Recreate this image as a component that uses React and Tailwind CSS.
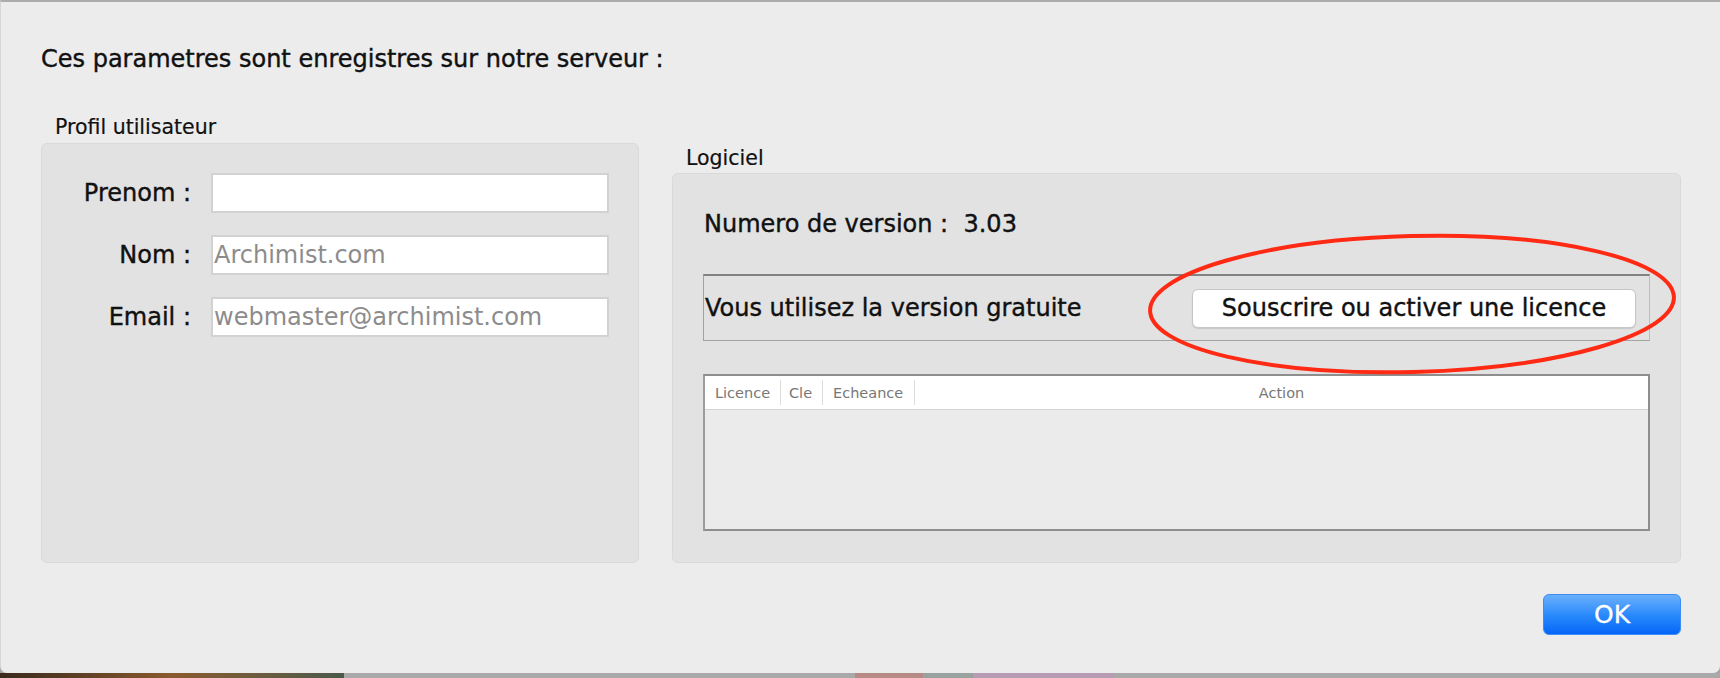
import React from "react";

const font = { fontFamily: '"DejaVu Sans", "Liberation Sans", sans-serif' };

function Field({ label, value }) {
  return (
    <div className="flex items-center">
      <div className="w-[149px] text-right text-[24px] leading-[28px] text-[#111] [-webkit-text-stroke:0.4px_#111]">{label}</div>
      <div className="ml-[20px] flex h-[40px] w-[398px] items-center border-2 border-[#d2d2d2] bg-white pl-[1px] text-[24px] leading-[28px] text-[#8c8c8c]">
        {value}
      </div>
    </div>
  );
}

export default function App() {
  return (
    <div className="flex h-[678px] w-[1720px] flex-col overflow-hidden bg-[#a6a6a6]" style={font}>
      {/* Dialog window */}
      <div className="flex h-[673px] flex-col rounded-b-[7px] border-t-2 border-l border-[#acacac] border-l-[#d6d6d6] bg-[#ececec] pt-[43px] pl-[40px] pr-[39px]">
        <h1 className="text-[24px] font-normal leading-[28px] text-[#111] [-webkit-text-stroke:0.4px_#111]">
          Ces parametres sont enregistres sur notre serveur :
        </h1>

        <div className="mt-[42px] flex items-end gap-[33px]">
          {/* Profil utilisateur */}
          <div className="flex w-[598px] flex-col">
            <div className="pl-[14px] text-[20.5px] leading-[24px] text-[#111] [-webkit-text-stroke:0.2px_#111]">Profil utilisateur</div>
            <div className="mt-[4px] flex h-[420px] flex-col gap-[22px] rounded-[6px] border border-[#d9d9d9] bg-[#e2e2e2] pt-[29px]">
              <Field label="Prenom :" value="" />
              <Field label="Nom :" value="Archimist.com" />
              <Field label="Email :" value="webmaster@archimist.com" />
            </div>
          </div>

          {/* Logiciel */}
          <div className="flex w-[1009px] flex-col">
            <div className="pl-[14px] text-[20.5px] leading-[24px] text-[#111] [-webkit-text-stroke:0.2px_#111]">Logiciel</div>
            <div className="relative mt-[3px] flex h-[390px] flex-col rounded-[6px] border border-[#d9d9d9] bg-[#e2e2e2] px-[30px] pt-[36px]">
              <div className="pl-[1px] text-[24px] leading-[28px] text-[#111] [-webkit-text-stroke:0.4px_#111]">
                Numero de version :&nbsp; 3.03
              </div>

              <div className="mt-[36px] flex h-[67px] items-center justify-between border border-[#a3a3a3] border-t-2 border-t-[#828282] border-r-[#bcbcbc] pl-[1px] pr-[13px]">
                <span className="text-[24px] leading-[28px] text-[#111] [-webkit-text-stroke:0.4px_#111]">Vous utilisez la version gratuite</span>
                <button className="flex h-[39px] w-[444px] items-center justify-center rounded-[6px] border border-[#c6c6c6] bg-white text-[24px] leading-[28px] text-[#111] shadow-[0_1px_1px_rgba(0,0,0,0.12)] [-webkit-text-stroke:0.4px_#111]">
                  Souscrire ou activer une licence
                </button>
              </div>

              {/* Licence table */}
              <div className="mt-[33px] flex h-[157px] flex-col border-2 border-[#8e8e8e] border-l-[#9d9d9d] bg-[#ebebeb]">
                <div className="flex h-[34px] items-center border-b border-[#d4d4d4] bg-white text-[14.5px] leading-[18px] text-[#777]">
                  <div className="flex h-[25px] w-[76px] items-center border-r border-[#dcdcdc] pl-[10px]">Licence</div>
                  <div className="flex h-[25px] w-[42px] items-center border-r border-[#dcdcdc] pl-[8px]">Cle</div>
                  <div className="flex h-[25px] w-[92px] items-center border-r border-[#dcdcdc] pl-[10px]">Echeance</div>
                  <div className="flex-1 text-center">Action</div>
                </div>
                <div className="flex-1" />
              </div>

              {/* Red annotation ellipse */}
              <svg
                className="pointer-events-none absolute left-[468px] top-[55px]"
                width="545"
                height="150"
                viewBox="0 0 545 150"
              >
                <ellipse
                  cx="271"
                  cy="75"
                  rx="262"
                  ry="68"
                  fill="none"
                  stroke="#ff2a14"
                  strokeWidth="4"
                  transform="rotate(-1.5 271 75)"
                />
              </svg>
            </div>
          </div>
        </div>

        <div className="mt-[31px] flex justify-end">
          <button className="flex h-[41px] w-[138px] items-center justify-center rounded-[6px] border border-[#3b8cf7] bg-gradient-to-b from-[#69affc] via-[#2a8bfb] to-[#0565f8] text-[25px] leading-[28px] text-white [-webkit-text-stroke:0.3px_#fff]">
            OK
          </button>
        </div>
      </div>

      {/* Desktop strip behind the window */}
      <div className="flex h-[5px]">
        <div className="w-[344px] bg-gradient-to-r from-[#3a2a1c] via-[#8a5a2e] to-[#4a5a4a]" />
        <div className="w-[511px] bg-[#a9a9a9]" />
        <div className="w-[68px] bg-[#b88a86]" />
        <div className="w-[50px] bg-[#9aa2a0]" />
        <div className="w-[141px] bg-[#b79cb4]" />
        <div className="flex-1 bg-[#a9a9a9]" />
      </div>
    </div>
  );
}
